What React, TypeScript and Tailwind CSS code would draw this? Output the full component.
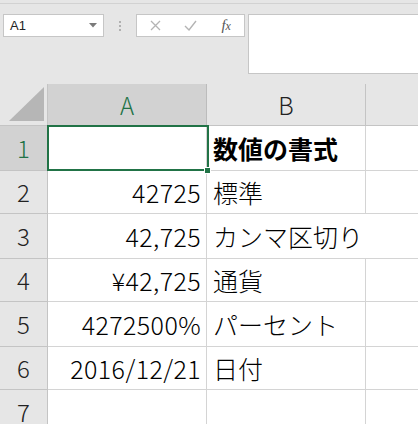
import React from "react";

const rows: { n: number; a: string; b: string; h: string; bold?: boolean }[] = [
  { n: 1, a: "", b: "数値の書式", h: "h-[45px]", bold: true },
  { n: 2, a: "42725", b: "標準", h: "h-[43px]" },
  { n: 3, a: "42,725", b: "カンマ区切り", h: "h-[45px]" },
  { n: 4, a: "¥42,725", b: "通貨", h: "h-[43px]" },
  { n: 5, a: "4272500%", b: "パーセント", h: "h-[45px]" },
  { n: 6, a: "2016/12/21", b: "日付", h: "h-[43px]" },
  { n: 7, a: "", b: "", h: "h-[44px]" },
];

export default function App() {
  return (
    <div className="relative w-[418px] h-[424px] overflow-hidden bg-[#e6e6e6] font-['Noto_Sans_CJK_JP',sans-serif]">
      {/* top formula area */}
      <div className="h-[84px]">
        <div className="h-[4px] border-b border-[#d2d2d2]" />
        <div className="flex items-start pt-[10px] pl-[3px]">
          <div className="w-[101px] h-[23px] bg-white border border-[#c6c6c6] flex items-center justify-between pl-[6px] pr-[6px]">
            <span className="text-[13px] leading-none text-[#222] font-['Liberation_Sans',sans-serif]">A1</span>
            <svg width="8" height="5" viewBox="0 0 8 5">
              <path d="M0 0 L8 0 L4 4.5 Z" fill="#7a7a7a" />
            </svg>
          </div>
          <div className="w-[32px] h-[23px] flex flex-col items-center justify-center gap-[2px]">
            <div className="w-[2px] h-[2px] bg-[#b0b0b0]" />
            <div className="w-[2px] h-[2px] bg-[#b0b0b0]" />
            <div className="w-[2px] h-[2px] bg-[#b0b0b0]" />
          </div>
          <div className="w-[109px] h-[23px] bg-white border border-[#c6c6c6] flex items-center">
            <div className="w-[36px] flex justify-center pl-[1px]">
              <svg width="11" height="11" viewBox="0 0 11 11">
                <path d="M1 1 L10 10 M10 1 L1 10" stroke="#b4b4b4" strokeWidth="1.3" />
              </svg>
            </div>
            <div className="w-[36px] flex justify-center">
              <svg width="13" height="11" viewBox="0 0 13 11">
                <path d="M1 6 L5 10 L12 1" stroke="#b4b4b4" strokeWidth="1.4" fill="none" />
              </svg>
            </div>
            <div className="w-[36px] flex justify-center">
              <span className="text-[15px] leading-none italic text-[#555] font-['Liberation_Serif',serif]">
                f<span className="text-[12px]">x</span>
              </span>
            </div>
          </div>
          <div className="ml-[3px] flex-1 h-[60px] bg-white border border-[#c6c6c6] border-r-0" />
        </div>
      </div>

      {/* grid */}
      <div className="grid grid-cols-[48px_159px_159px_52px]">
        {/* header row */}
        <div className="h-[42px] border-b border-r border-[#c4c4c4] flex items-end justify-end pr-[3px] pb-[4px]">
          <svg width="35" height="34" viewBox="0 0 35 34">
            <path d="M35 0 L35 34 L0 34 Z" fill="#b6b6b6" />
          </svg>
        </div>
        <div className="h-[42px] bg-[#d2d2d2] border-b border-r border-[#bcbcbc] flex items-center justify-center text-[24px] leading-none text-[#217346] font-light">
          A
        </div>
        <div className="h-[42px] border-b border-r border-[#c4c4c4] flex items-center justify-center text-[24px] leading-none text-[#222] font-light">
          B
        </div>
        <div className="h-[42px] border-b border-[#c4c4c4]" />

        {rows.map((r) => (
          <React.Fragment key={r.n}>
            <div
              className={`${r.h} border-b border-r border-[#c4c4c4] flex items-center justify-center text-[24px] leading-none font-light ${
                r.n === 1 ? "bg-[#d2d2d2] text-[#217346]" : "bg-[#e6e6e6] text-[#222]"
              }`}
            >
              {r.n}
            </div>
            <div className={`${r.h} bg-white border-b border-r border-[#d4d4d4] flex items-center justify-end pr-[5px] text-[25px] leading-none text-black whitespace-nowrap font-light tracking-[0.4px]`}>
              {r.a}
            </div>
            <div className={`${r.h} bg-white border-b border-r border-[#d4d4d4] flex items-center pl-[6px] text-[25px] leading-none text-black whitespace-nowrap overflow-visible ${r.bold ? "font-bold" : "font-light"} ${r.n === 3 ? "border-r-0" : ""}`}>
              {r.b}
            </div>
            <div className={`${r.h} bg-white border-b border-[#d4d4d4]`} />
          </React.Fragment>
        ))}
      </div>

      {/* selection overlay */}
      <div className="absolute left-[47px] top-[125px] w-[162px] h-[46px] border-2 border-[#217346] pointer-events-none" />
      <div className="absolute left-[204px] top-[167px] w-[7px] h-[7px] bg-[#217346] border border-white" />
    </div>
  );
}
